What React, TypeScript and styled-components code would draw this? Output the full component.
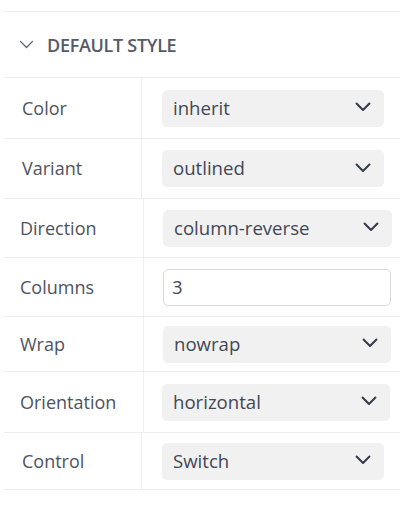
import React from "react";
import styled, { createGlobalStyle } from "styled-components";

const Global = createGlobalStyle`
  html, body { margin: 0; padding: 0; background: #ffffff; }
  body { font-family: "Open Sans", "Noto Sans", sans-serif; }
`;

const Panel = styled.div`
  width: 403px;
  padding: 11px 3px 0 4px;
  box-sizing: border-box;
`;

const Section = styled.section`
  border-top: 1.5px solid #eeeeee;
`;

const Header = styled.div`
  height: 66px;
  display: flex;
  align-items: center;
  gap: 13px;
  padding-left: 15px;
  border-bottom: 1.5px solid #eeeeee;
  box-sizing: border-box;
`;

const HeaderTitle = styled.span`
  font-size: 18px;
  font-weight: 600;
  letter-spacing: -0.3px;
  color: #555a66;
`;

const Row = styled.div<{ $h: number }>`
  display: flex;
  height: ${(p) => p.$h}px;
  border-bottom: 1.5px solid #eeeeee;
  box-sizing: border-box;
`;

const LabelCell = styled.div<{ $w: number; $pad: number }>`
  width: ${(p) => p.$w}px;
  flex: none;
  display: flex;
  align-items: center;
  padding: 0 0 1px ${(p) => p.$pad}px;
  box-sizing: border-box;
  border-right: 1px solid #efefef;
  font-size: 18px;
  color: #4e5360;
`;

const ValueCell = styled.div<{ $pad: number }>`
  flex: 1;
  display: flex;
  align-items: center;
  padding-left: ${(p) => p.$pad}px;
`;

const Select = styled.div<{ $w: number }>`
  width: ${(p) => p.$w}px;
  height: 37px;
  box-sizing: border-box;
  border-radius: 5px;
  background: #f1f1f1;
  display: flex;
  align-items: center;
  justify-content: space-between;
  padding: 0 13px 2px 11px;
  font-size: 18.6px;
  color: #424755;
`;

const Input = styled.div<{ $w: number }>`
  width: ${(p) => p.$w}px;
  height: 37px;
  box-sizing: border-box;
  border-radius: 5px;
  background: #ffffff;
  border: 1px solid #d9d9d9;
  display: flex;
  align-items: center;
  padding: 0 0 2px 8px;
  font-size: 18.6px;
  color: #424755;
`;

const Chevron = ({ size = 16, color = "#353b48", w = 2 }: { size?: number; color?: string; w?: number }) => (
  <svg width={size} height={size * 0.62} viewBox="0 0 16 10" fill="none">
    <path d="M1.5 1.5 L8 8 L14.5 1.5" stroke={color} strokeWidth={w} strokeLinecap="round" strokeLinejoin="round" />
  </svg>
);

type Item = {
  label: string;
  value: string;
  h: number;
  lw: number;
  lp: number;
  vp: number;
  cw: number;
  input?: boolean;
};

const items: Item[] = [
  { label: "Color", value: "inherit", h: 61, lw: 138, lp: 18, vp: 20, cw: 222 },
  { label: "Variant", value: "outlined", h: 60, lw: 138, lp: 18, vp: 20, cw: 222 },
  { label: "Direction", value: "column-reverse", h: 59, lw: 140, lp: 16, vp: 19, cw: 229 },
  { label: "Columns", value: "3", h: 59, lw: 140, lp: 16, vp: 19, cw: 228, input: true },
  { label: "Wrap", value: "nowrap", h: 55, lw: 140, lp: 16, vp: 19, cw: 228 },
  { label: "Orientation", value: "horizontal", h: 61, lw: 140, lp: 16, vp: 18, cw: 228 },
  { label: "Control", value: "Switch", h: 57, lw: 138, lp: 18, vp: 20, cw: 222 },
];

export default function App() {
  return (
    <>
      <Global />
      <Panel>
        <Section>
          <Header>
            <Chevron size={15} color="#5a5f6b" w={1.4} />
            <HeaderTitle>DEFAULT STYLE</HeaderTitle>
          </Header>
          {items.map((it) => (
            <Row key={it.label} $h={it.h}>
              <LabelCell $w={it.lw} $pad={it.lp}>{it.label}</LabelCell>
              <ValueCell $pad={it.vp}>
                {it.input ? (
                  <Input $w={it.cw}>{it.value}</Input>
                ) : (
                  <Select $w={it.cw}>
                    <span>{it.value}</span>
                    <Chevron />
                  </Select>
                )}
              </ValueCell>
            </Row>
          ))}
        </Section>
      </Panel>
    </>
  );
}
